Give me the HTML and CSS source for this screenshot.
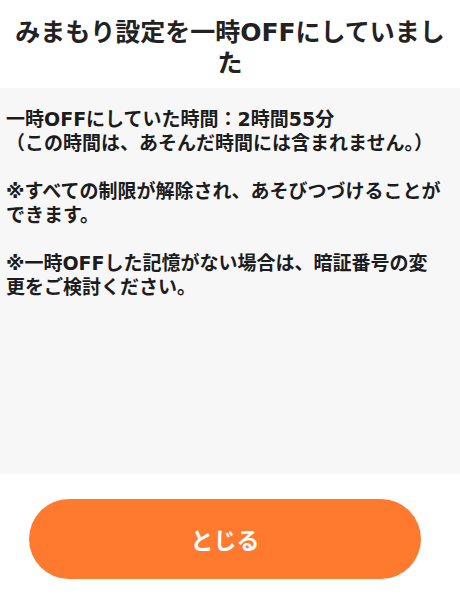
FILE: index.html
```html
<!DOCTYPE html>
<html lang="ja">
<head>
  <meta charset="utf-8" />
  <meta name="viewport" content="width=device-width, initial-scale=1" />
  <title>みまもり設定</title>
  <link rel="stylesheet" href="styles.css">
</head>
<body>
  <div class="dialog">
    <h1 class="title">みまもり設定を一時OFFにしていました</h1>
    <div class="message">
      <p class="summary">一時OFFにしていた時間：2時間55分
（この時間は、あそんだ時間には含まれません。）</p>
      <p>※すべての制限が解除され、あそびつづけることができます。</p>
      <p>※一時OFFした記憶がない場合は、暗証番号の変更をご検討ください。</p>
    </div>
    <div class="footer">
      <button class="btn" onclick="closeDialog()">とじる</button>
    </div>
  </div>

  <script>
    function closeDialog() {
      window.history.back();
    }
  </script>
</body>
</html>
```

FILE: styles.css
```css
body {
  font-family: "DejaVu Sans", "Noto Sans CJK JP", sans-serif;
  margin: 0;
  padding: 0;
  background-color: white;
  color: #1c1c1c;
}
.dialog {
  width: 460px;
}
.title {
  margin: 0;
  padding: 17px 10px 9px;
  font-size: 25px;
  font-weight: 700;
  line-height: 31px;
  text-align: center;
  color: #222;
}
.message {
  box-sizing: border-box;
  height: 386px;
  padding: 19px 15px 0 6px;
  background-color: #f7f7f7;
  font-size: 19px;
  font-weight: 700;
  line-height: 24px;
}
.message p {
  margin: 0 0 24px;
}
.message .summary {
  white-space: pre-line;
}
.footer {
  padding: 25px 39px 0 29px;
}
.btn {
  display: block;
  width: 100%;
  height: 80px;
  border: none;
  border-radius: 40px;
  background-color: #ff7a2f;
  color: white;
  font-family: "Noto Sans CJK JP", sans-serif;
  font-size: 23px;
  font-weight: 700;
  cursor: pointer;
}
```
